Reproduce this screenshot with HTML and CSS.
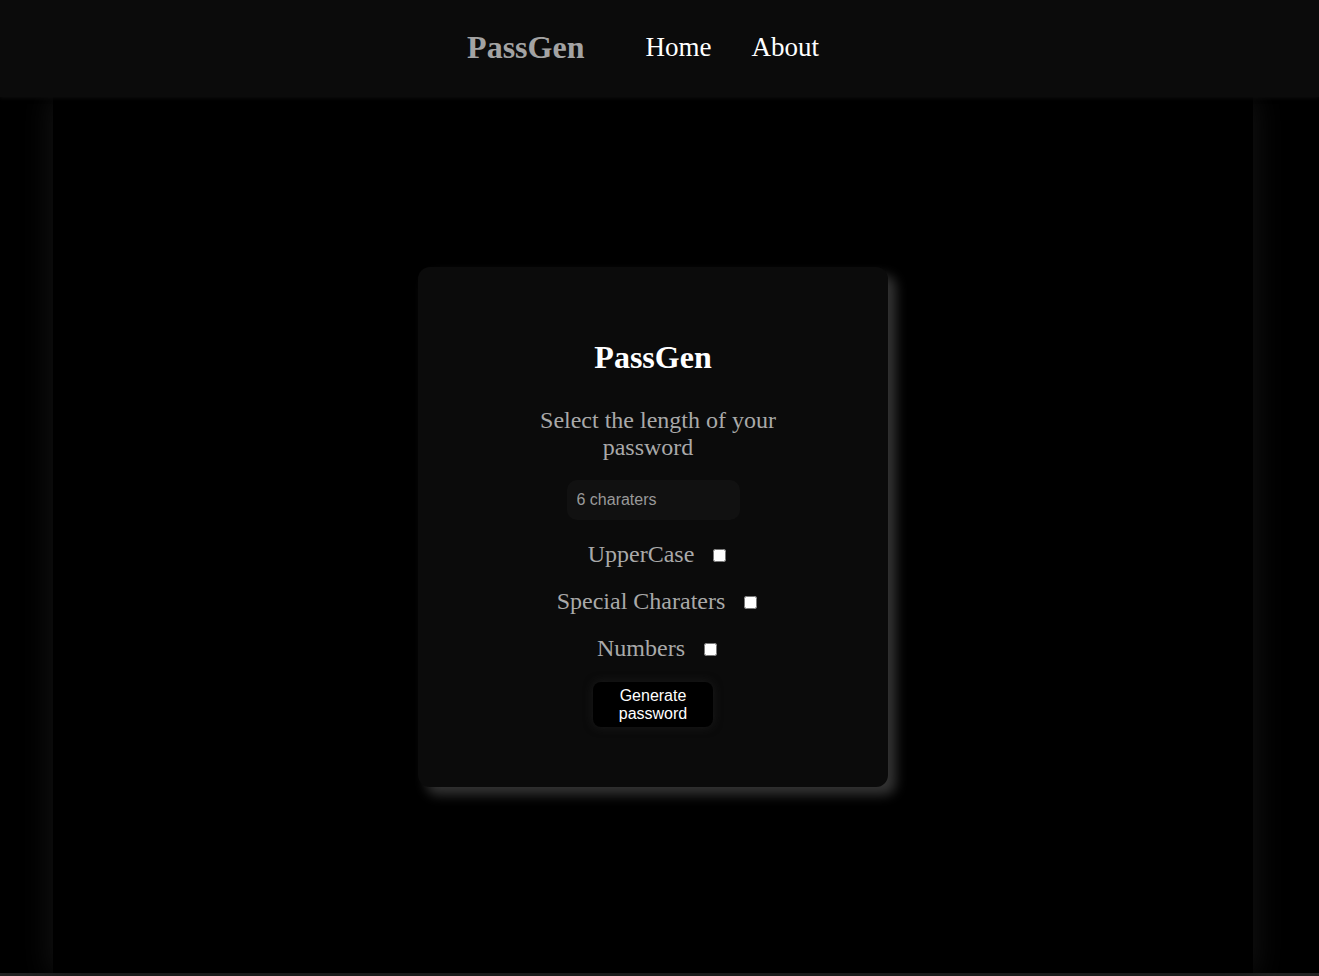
FILE: index.html
```html
<!DOCTYPE html>
<html lang="en">
<head>
<meta charset="utf-8">
<title>PassGen</title>
<link rel="stylesheet" href="styles.css">
</head>
<body>
<header class="topbar">
  <nav class="nav">
    <a class="logo" href="#">PassGen</a>
    <a class="nav-link home" href="#">Home</a>
    <a class="nav-link" href="#">About</a>
  </nav>
</header>
<main class="main">
  <section class="card">
    <h1 class="card-title">PassGen</h1>
    <p class="prompt"><span class="line1">Select the length of your</span><span class="line2">password</span></p>
    <input class="length-input" type="text" placeholder="6 charaters">
    <label class="option"><span>UpperCase</span><input type="checkbox"></label>
    <label class="option"><span>Special Charaters</span><input type="checkbox"></label>
    <label class="option"><span>Numbers</span><input type="checkbox"></label>
    <button class="generate">Generate<br>password</button>
  </section>
</main>
<footer class="footer"></footer>
</body>
</html>
```

FILE: styles.css
```css
html, body {
  margin: 0;
  padding: 0;
  background: #000;
  font-family: "Liberation Serif", "Times New Roman", serif;
}

.topbar {
  position: relative;
  z-index: 2;
  height: 97px;
  background: #0b0b0b;
  box-shadow: 0 1px 4px rgba(16, 16, 16, 0.9);
  display: flex;
  align-items: center;
  justify-content: center;
}

.nav {
  display: flex;
  align-items: center;
  padding-right: 33px;
  padding-bottom: 2px;
}

.nav a {
  text-decoration: none;
}

.logo {
  font-size: 32px;
  font-weight: bold;
  color: #a3a3a3;
  margin-right: 61px;
}

.nav-link {
  font-size: 27px;
  color: #fff;
}

.home {
  margin-right: 40px;
}

.main {
  width: 1200px;
  height: 876px;
  margin: 0 0 0 53px;
  background: #000;
  box-shadow: 0 0 30px 2px #141414;
  padding-top: 170px;
  box-sizing: border-box;
  position: relative;
  z-index: 1;
}

.card {
  width: 470px;
  margin: 0 auto;
  box-sizing: border-box;
  background: #0b0b0b;
  border-radius: 12px;
  box-shadow: 8px 8px 12px #333;
  padding: 72px 0 60px;
  display: flex;
  flex-direction: column;
  align-items: center;
}

.card-title {
  margin: 0;
  font-size: 32px;
  font-weight: bold;
  color: #fff;
  line-height: 37px;
}

.prompt {
  margin: 31px 0 0;
  font-size: 24px;
  line-height: 27px;
  color: #a9a9a9;
  text-align: center;
  display: flex;
  flex-direction: column;
  align-items: center;
}

.line1 {
  padding-left: 10px;
}

.line2 {
  padding-right: 10px;
}

.length-input {
  margin-top: 19px;
  width: 173px;
  height: 40px;
  box-sizing: border-box;
  border: none;
  outline: none;
  border-radius: 10px;
  background: #111;
  padding: 0 10px;
  font-family: "Liberation Sans", Arial, sans-serif;
  font-size: 16px;
  color: #ccc;
}

.length-input::placeholder {
  color: #9a9a9a;
}

.option {
  margin-top: 20px;
  display: flex;
  align-items: center;
  font-size: 24px;
  line-height: 27px;
  color: #a9a9a9;
  padding-left: 8px;
}

.length-input + .option {
  margin-top: 21px;
}

.option input {
  width: 13px;
  height: 13px;
  margin: 2px 0 0 19px;
}

.generate {
  margin-top: 20px;
  width: 120px;
  height: 45px;
  border: none;
  border-radius: 8px;
  background: #000;
  color: #fff;
  font-family: "Liberation Sans", Arial, sans-serif;
  font-size: 16px;
  line-height: 18px;
  box-shadow: 0 0 10px #1c1c1c;
  padding: 0;
}

.footer {
  height: 3px;
  background: #222;
}
```
